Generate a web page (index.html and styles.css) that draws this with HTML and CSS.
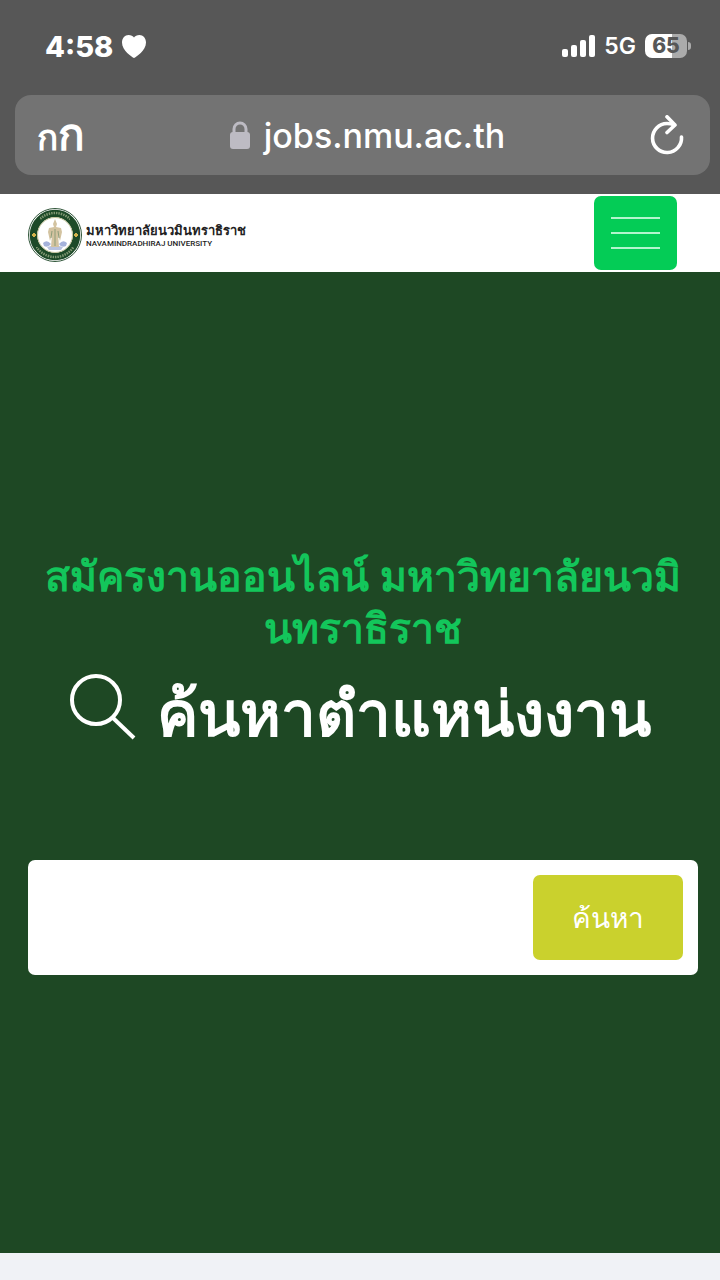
FILE: index.html
```html
<!DOCTYPE html>
<html lang="th">
<head>
    <meta charset="UTF-8">
    <meta name="viewport" content="width=device-width, initial-scale=1.0">
    <title>มหาวิทยาลัยนวมินทราธิราช</title>
    <link rel="stylesheet" href="styles.css">
</head>
<body>
    <div class="browser">
        <div class="status-bar">
            <div class="status-left">
                <span class="time">4:58</span>
                <svg class="heart" viewBox="0 0 24 23" width="24" height="23">
                    <path d="M12 23C10 22 0 15.500 0 7.500C0 3 3 0 6.500 0C9 0 11 1 12 2.500C13 1 15 0 17.500 0C21 0 24 3 24 7.500C24 15.500 14 22 12 23Z" fill="#fff"/>
                </svg>
            </div>
            <div class="status-right">
                <svg viewBox="0 0 33 22" width="33" height="22" fill="#fff">
                    <rect x="0" y="14" width="6" height="8" rx="2"/>
                    <rect x="9" y="10" width="6" height="12" rx="2"/>
                    <rect x="18" y="5" width="6" height="17" rx="2"/>
                    <rect x="27" y="0" width="6" height="22" rx="2"/>
                </svg>
                <span class="network">5G</span>
                <div class="battery">
                    <span class="battery-level">65</span>
                    <span class="battery-tip"></span>
                </div>
            </div>
        </div>
        <div class="address-bar">
            <button class="text-size" type="button" aria-label="ขนาดข้อความ"><span class="small-letter">ก</span><span class="big-letter">ก</span></button>
            <div class="url">
                <svg viewBox="0 0 20 28" width="20" height="28">
                    <path d="M4 14V8A6 6 0 0 1 16 8V14" fill="none" stroke="#bdbbc3" stroke-width="3"/>
                    <rect x="0" y="11" width="20" height="17" rx="3" fill="#bdbbc3"/>
                </svg>
                <span>jobs.nmu.ac.th</span>
            </div>
            <button class="reload" type="button" aria-label="โหลดใหม่">
                <svg viewBox="0 0 34 40" width="34" height="40" fill="none" stroke="#fff" stroke-width="3.600" stroke-linecap="round" stroke-linejoin="round">
                    <path d="M31.500 22A14.500 14.500 0 1 1 17 8.500Q21 8.500 24 10"/>
                    <path d="M17 1.800L25 10L17 17.500"/>
                </svg>
            </button>
        </div>
    </div>

    <header class="navbar">
        <a class="brand" href="#">
            <svg class="seal" viewBox="0 0 54 54" width="54" height="54">
                <circle cx="27" cy="27" r="26.500" fill="#fff" stroke="#31563a" stroke-width="1"/>
                <circle cx="27" cy="27" r="21.500" fill="none" stroke="#1d4a28" stroke-width="7.500"/>
                <circle cx="27" cy="27" r="17.500" fill="#fff" stroke="#c4c39a" stroke-width="1"/>
                <circle cx="27" cy="27" r="22" fill="none" stroke="#a9b892" stroke-width="2.500" stroke-dasharray="1.500 1" stroke-dashoffset="-6" opacity="0.700" pathLength="140" clip-path="url(#ends)"/>
                <clipPath id="ends">
                    <rect x="12" y="0" width="30" height="12"/>
                    <rect x="8" y="39" width="38" height="14"/>
                </clipPath>
                <path d="M6 25V29M4 27H8M48 25V29M46 27H50" stroke="#d3b34c" stroke-width="2"/>
                <path d="M15 35Q19 31 23 36Q20 40 16 38ZM31 36Q35 31 39 35L38 38Q33 40 31 36Z" fill="#a5b2db"/>
                <path d="M19 39Q27 36 35 39L33 42H21Z" fill="#b8c2df"/>
                <path d="M27 11L29 16L28 19L33 20L34 24L32 33L30 26L31 39H23L24 26L22 33L20 24L21 20L26 19L25 16Z" fill="#d3c3a0"/>
                <path d="M27 21V38M24 23L23 30M30 23L31 30" stroke="#8d9d79" stroke-width="1"/>
            </svg>
            <span class="brand-text">
                <span class="brand-th">มหาวิทยาลัยนวมินทราธิราช</span>
                <span class="brand-en">NAVAMINDRADHIRAJ UNIVERSITY</span>
            </span>
        </a>
        <button class="menu" type="button" aria-label="เมนู">
            <span></span>
            <span></span>
            <span></span>
        </button>
    </header>

    <main class="hero">
        <h2>สมัครงานออนไลน์ มหาวิทยาลัยนวมินทราธิราช</h2>
        <h1>
            <svg viewBox="0 0 68 68" width="68" height="68" fill="none" stroke="#fff" stroke-width="4">
                <circle cx="26" cy="27" r="24"/>
                <path d="M42 44L64 65"/>
            </svg>
            <span>ค้นหาตำแหน่งงาน</span>
        </h1>
        <form class="search">
            <input type="text" aria-label="ค้นหาตำแหน่งงาน">
            <button type="submit">ค้นหา</button>
        </form>
    </main>

    <footer class="next-section"></footer>
</body>
</html>
```
FILE: styles.css
```css
* {
    box-sizing: border-box;
}

body {
    display: flex;
    flex-direction: column;
    min-height: 100vh;
    margin: 0;
    background-color: #f0f2f6;
    font-family: Inter, "Liberation Sans", sans-serif;
    color: #fff;
}

button {
    border: 0;
    padding: 0;
    background: none;
    color: #fff;
    font-family: inherit;
}

svg {
    display: block;
    flex-shrink: 0;
}

/* phone status bar and address bar */
.browser {
    padding: 28px 10px 19px 15px;
    background-color: #575757;
}

.status-bar {
    display: flex;
    justify-content: space-between;
    align-items: center;
    height: 36px;
    padding: 0 19px 0 30px;
}

.status-left,
.status-right {
    display: flex;
    align-items: center;
    gap: 9px;
}

.time {
    font-size: 29px;
    font-weight: 800;
}

.network {
    font-size: 23px;
    font-weight: 600;
}

.battery {
    display: flex;
    align-items: center;
    gap: 1px;
}

.battery-level {
    width: 42px;
    border-radius: 7px;
    background: linear-gradient(to right, #fff 65%, #ababab 65%);
    color: #575757;
    font-size: 21px;
    font-weight: 800;
    line-height: 24px;
    text-align: center;
}

.battery-tip {
    width: 3px;
    height: 8px;
    border-radius: 0 4px 4px 0;
    background-color: #ababab;
}

.address-bar {
    display: flex;
    justify-content: space-between;
    align-items: center;
    height: 80px;
    margin-top: 31px;
    padding: 0 26px 0 22px;
    border-radius: 16px;
    background-color: #737373;
}

.text-size {
    display: flex;
    align-items: baseline;
    font-weight: 600;
    line-height: 40px;
}

.small-letter {
    font-size: 35px;
}

.big-letter {
    font-size: 44px;
}

.url {
    display: flex;
    align-items: center;
    gap: 14px;
    font-size: 34px;
    font-weight: 500;
}

/* site header */
.navbar {
    display: flex;
    justify-content: space-between;
    align-items: center;
    padding: 2px 43px 2px 28px;
    background-color: #fff;
}

.brand {
    display: flex;
    align-items: center;
    gap: 4px;
    padding-top: 3px;
    color: #222;
    text-decoration: none;
}

.brand-text {
    display: flex;
    flex-direction: column;
}

.brand-th {
    font-size: 13px;
    font-weight: 700;
    line-height: 18px;
}

.brand-en {
    font-family: Roboto, sans-serif;
    font-size: 8px;
    font-weight: 500;
    line-height: 10px;
}

.menu {
    display: flex;
    flex-direction: column;
    align-items: center;
    justify-content: center;
    gap: 13px;
    width: 83px;
    height: 74px;
    border-radius: 7px;
    background-color: #04cc56;
}

.menu span {
    width: 49px;
    height: 2px;
    background-color: #b4f5cd;
}

/* search hero */
.hero {
    display: flex;
    flex: 1;
    flex-direction: column;
    justify-content: center;
    padding: 0 22px 0 28px;
    background-color: #1e4824;
}

h2 {
    margin: 0;
    color: #13c65b;
    font-size: 41px;
    font-weight: 600;
    line-height: 52px;
    text-align: center;
}

h1 {
    display: flex;
    justify-content: center;
    align-items: flex-start;
    gap: 19px;
    margin: 19px 0 105px;
    padding-right: 6px;
    font-size: 62px;
    font-weight: 700;
    line-height: 82px;
}

.search {
    display: flex;
    padding: 15px;
    border-radius: 7px;
    background-color: #fff;
}

.search input {
    flex: 1;
    min-width: 0;
    border: 0;
    outline: 0;
    background: none;
    font-size: 29px;
}

.search button {
    width: 150px;
    height: 85px;
    border-radius: 7px;
    background-color: #cad12d;
    font-size: 28px;
}

.next-section {
    height: 27px;
    background-color: #f0f2f6;
}
```
